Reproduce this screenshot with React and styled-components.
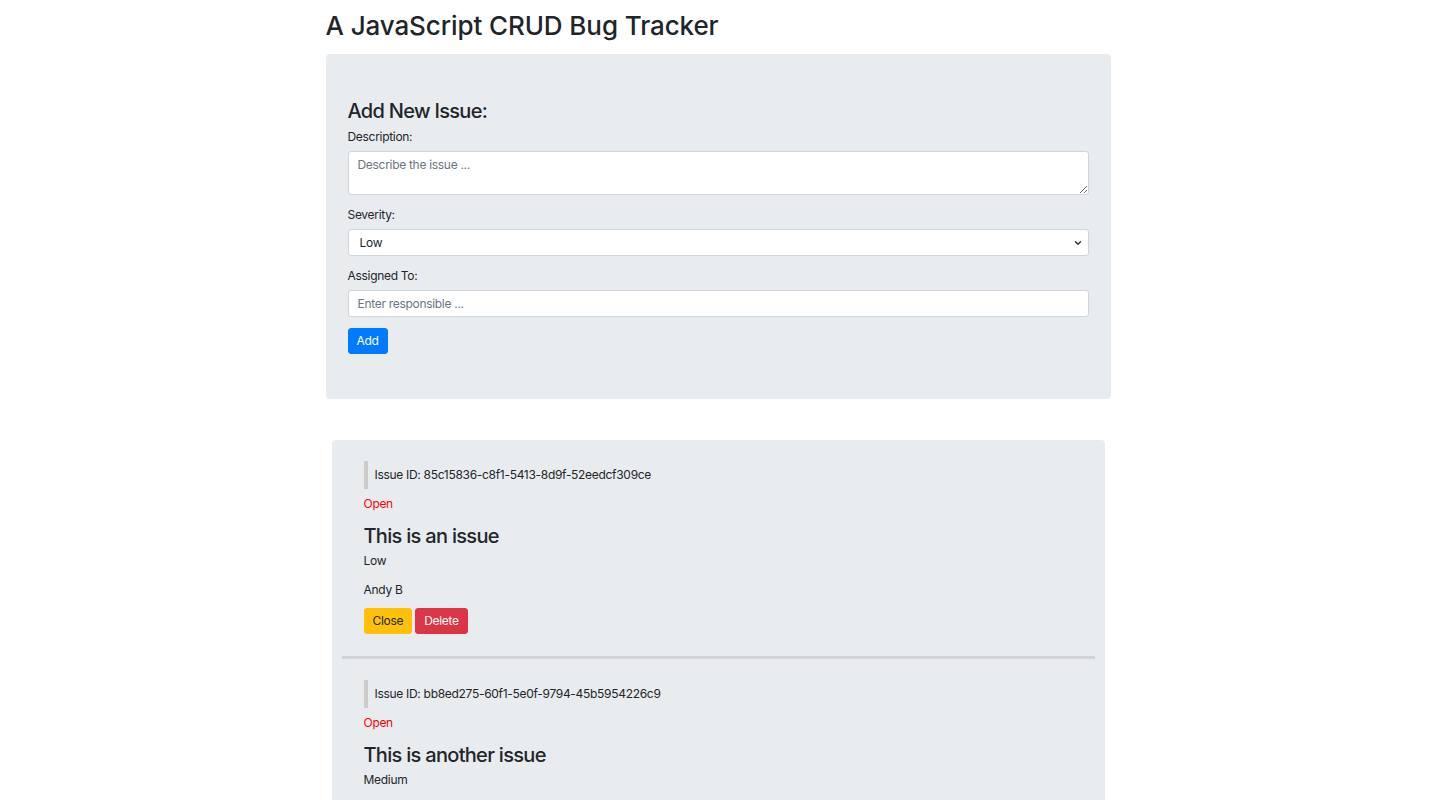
import React from 'react';
import styled, { createGlobalStyle } from 'styled-components';
import { ChevronDown } from 'lucide-react';

const GlobalStyle = createGlobalStyle`
    * {
        box-sizing: border-box;
    }

    body {
        margin: 0;
        background: #fff;
        color: #212529;
        font-family: Inter, "Noto Sans", "Liberation Sans", sans-serif;
        font-size: 12px;
        line-height: 1.5;
        letter-spacing: -0.3px;
    }
`;

const issues = [
    { id: '85c15836-c8f1-5413-8d9f-52eedcf309ce', status: 'Open', description: 'This is an issue', severity: 'Low', assignedTo: 'Andy B' },
    { id: 'bb8ed275-60f1-5e0f-9794-45b5954226c9', status: 'Open', description: 'This is another issue', severity: 'Medium', assignedTo: 'Jane D' },
];

const App = () => {
    const handleSubmit = (e) => {
        e.preventDefault();
    };

    return (
        <Container>
            <GlobalStyle />
            <Title>A JavaScript CRUD Bug Tracker</Title>

            <Jumbotron>
                <SubTitle>Add New Issue:</SubTitle>
                <form onSubmit={handleSubmit}>
                    <FormGroup>
                        <Label htmlFor="issueDescInput">Description:</Label>
                        <TextArea id="issueDescInput" placeholder="Describe the issue ..." />
                    </FormGroup>
                    <FormGroup>
                        <Label htmlFor="issueSeverityInput">Severity:</Label>
                        <SelectWrap>
                            <Select id="issueSeverityInput" defaultValue="Low">
                                <option value="Low">Low</option>
                                <option value="Medium">Medium</option>
                                <option value="High">High</option>
                            </Select>
                            <Chevron size={10} strokeWidth={3.5} />
                        </SelectWrap>
                    </FormGroup>
                    <FormGroup>
                        <Label htmlFor="issueAssignedToInput">Assigned To:</Label>
                        <Input id="issueAssignedToInput" type="text" placeholder="Enter responsible ..." />
                    </FormGroup>
                    <Button type="submit" $variant="primary">Add</Button>
                </form>
            </Jumbotron>

            <IssueList>
                {issues.map((issue, i) => (
                    <React.Fragment key={issue.id}>
                        {i > 0 && <Divider />}
                        <IssueItem>
                            <IssueId>Issue ID: {issue.id}</IssueId>
                            <Status>{issue.status}</Status>
                            <IssueTitle>{issue.description}</IssueTitle>
                            <Meta>{issue.severity}</Meta>
                            <Meta>{issue.assignedTo}</Meta>
                            <Actions>
                                <Button $variant="warning">Close</Button>
                                <Button $variant="danger">Delete</Button>
                            </Actions>
                        </IssueItem>
                    </React.Fragment>
                ))}
            </IssueList>
        </Container>
    );
};

const Container = styled.div`
    width: 785px;
    margin: 0 auto;
    padding-top: 8px;
`;

const Title = styled.h1`
    margin: 0 0 10px;
    font-size: 26px;
    font-weight: 500;
    line-height: 36px;
    letter-spacing: -0.1px;
`;

const Jumbotron = styled.div`
    background-color: #e9ecef;
    border-radius: 4px;
    padding: 45px 22px;
`;

const SubTitle = styled.h3`
    margin: 0 0 5px;
    font-size: 20px;
    font-weight: 500;
    line-height: 24px;
    letter-spacing: -0.7px;
`;

const FormGroup = styled.div`
    display: flex;
    flex-direction: column;
    margin-bottom: 11px;
`;

const Label = styled.label`
    display: block;
    margin-bottom: 5px;
    font-size: 12px;
    line-height: 18px;
`;

const fieldStyle = `
    width: 100%;
    border: 1px solid #ced4da;
    border-radius: 3px;
    background-color: #fff;
    color: #495057;
    font-family: Inter, "Noto Sans", "Liberation Sans", sans-serif;
    font-size: 12px;
    letter-spacing: -0.3px;
    outline: none;

    &::placeholder {
        color: #6c757d;
    }
`;

const TextArea = styled.textarea`
    ${fieldStyle}
    height: 44px;
    padding: 4px 9px;
    line-height: 18px;
    resize: vertical;
    display: block;
`;

const SelectWrap = styled.div`
    position: relative;
`;

const Select = styled.select`
    ${fieldStyle}
    height: 27px;
    padding: 0 20px 0 11px;
    appearance: none;
    color: #212529;
`;

const Chevron = styled(ChevronDown)`
    position: absolute;
    right: 6px;
    top: 9px;
    color: #333;
    pointer-events: none;
`;

const Input = styled.input`
    ${fieldStyle}
    height: 27px;
    padding: 0 9px;
`;

const buttonColors = {
    primary: { bg: '#007bff', fg: '#fff' },
    warning: { bg: '#ffc107', fg: '#212529' },
    danger: { bg: '#dc3545', fg: '#fff' },
};

const Button = styled.button`
    height: 26px;
    padding: 0 8px;
    border: 1px solid ${(p) => buttonColors[p.$variant].bg};
    border-radius: 3px;
    background-color: ${(p) => buttonColors[p.$variant].bg};
    color: ${(p) => buttonColors[p.$variant].fg};
    font-family: Inter, "Noto Sans", "Liberation Sans", sans-serif;
    font-size: 12px;
    letter-spacing: -0.3px;
    line-height: 1;
    cursor: pointer;
`;

const IssueList = styled.div`
    margin: 41px 6px 0;
    padding: 0 10px;
    background-color: #e9ecef;
    border-radius: 4px;
`;

const IssueItem = styled.div`
    padding: 21px 22px 22px;
`;

const Divider = styled.hr`
    margin: 0;
    border: none;
    border-top: 3px solid #d1d3d6;
`;

const IssueId = styled.h6`
    margin: 0 0 5px;
    padding: 5px 0 5px 7px;
    border-left: 4px solid #ccc;
    font-size: 12px;
    font-weight: 400;
    line-height: 18px;
`;

const Status = styled.p`
    margin: 0 0 11px;
    color: #ff0000;
    line-height: 18px;
    transform: translateY(1px);
`;

const IssueTitle = styled.h3`
    margin: 0 0 4px;
    padding-top: 1px;
    font-size: 20px;
    font-weight: 500;
    line-height: 24px;
    letter-spacing: -0.7px;
`;

const Meta = styled.p`
    margin: 0 0 11px;
    line-height: 18px;
`;

const Actions = styled.div`
    display: flex;
    gap: 3px;
    margin-top: -2px;
`;

export default App;
